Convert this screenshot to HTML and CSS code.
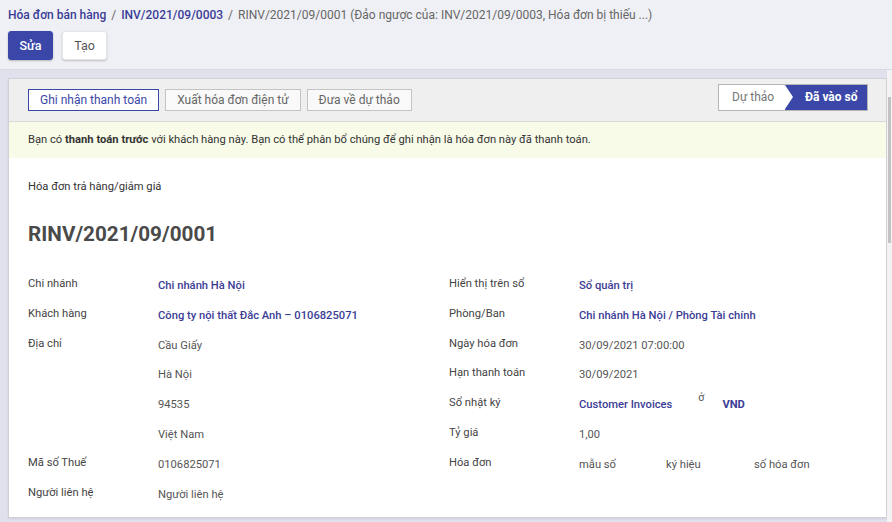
FILE: index.html
```html
<!DOCTYPE html>
<html lang="vi">
<head>
<meta charset="utf-8">
<title>RINV/2021/09/0001</title>
<link rel="stylesheet" href="styles.css">
</head>
<body>
<div class="control-panel">
  <div class="breadcrumb">
    <a class="crumb-link">Hóa đơn bán hàng</a><span class="sep">/</span><a class="crumb-link">INV/2021/09/0003</a><span class="sep">/</span><span class="crumb-active">RINV/2021/09/0001 (Đảo ngược của: INV/2021/09/0003, Hóa đơn bị thiếu ...)</span>
  </div>
  <div class="cp-buttons">
    <button class="btn-primary">Sửa</button>
    <button class="btn-secondary">Tạo</button>
  </div>
</div>
<div class="content">
  <div class="main">
    <div class="sheet">
      <div class="statusbar">
        <div class="actions">
          <button class="act act-primary">Ghi nhận thanh toán</button>
          <button class="act">Xuất hóa đơn điện tử</button>
          <button class="act">Đưa về dự thảo</button>
        </div>
        <div class="status">
          <span class="st st-draft">Dự thảo</span>
          <span class="st st-posted">Đã vào sổ</span>
        </div>
      </div>
      <div class="alert">Bạn có <b>thanh toán trước</b> với khách hàng này. Bạn có thể phân bổ chúng để ghi nhận là hóa đơn này đã thanh toán.</div>
      <div class="body">
        <div class="subtitle">Hóa đơn trả hàng/giảm giá</div>
        <h1 class="title">RINV/2021/09/0001</h1>
        <div class="groups">
          <div class="group">
            <div class="lbl">Chi nhánh</div><div class="val link">Chi nhánh Hà Nội</div>
            <div class="lbl">Khách hàng</div><div class="val link">Công ty nội thất Đắc Anh – 0106825071</div>
            <div class="lbl">Địa chỉ</div><div class="val">Cầu Giấy</div>
            <div class="lbl"></div><div class="val">Hà Nội</div>
            <div class="lbl"></div><div class="val">94535</div>
            <div class="lbl"></div><div class="val">Việt Nam</div>
            <div class="lbl">Mã số Thuế</div><div class="val">0106825071</div>
            <div class="lbl">Người liên hệ</div><div class="val">Người liên hệ</div>
          </div>
          <div class="group">
            <div class="lbl">Hiển thị trên sổ</div><div class="val link">Sổ quản trị</div>
            <div class="lbl">Phòng/Ban</div><div class="val link">Chi nhánh Hà Nội / Phòng Tài chính</div>
            <div class="lbl">Ngày hóa đơn</div><div class="val">30/09/2021 07:00:00</div>
            <div class="lbl">Hạn thanh toán</div><div class="val">30/09/2021</div>
            <div class="lbl">Sổ nhật ký</div><div class="val journal"><span class="link">Customer Invoices</span><span class="in">ở</span><span class="link bold">VND</span></div>
            <div class="lbl">Tỷ giá</div><div class="val">1,00</div>
            <div class="lbl">Hóa đơn</div><div class="val inv"><span class="c1">mẫu số</span><span class="c2">ký hiệu</span><span>số hóa đơn</span></div>
          </div>
        </div>
      </div>
    </div>
  </div>
  <div class="scrolltrack"><div class="thumb"></div></div>
</div>
</body>
</html>
```
FILE: styles.css
```css
* { box-sizing: border-box; }
html, body { margin: 0; padding: 0; }
body {
  width: 892px;
  height: 522px;
  overflow: hidden;
  font-family: Roboto, "Liberation Sans", sans-serif;
  font-size: 11.2px;
  color: #4c4c4c;
  background: #e0e1ec;
}
.control-panel {
  height: 70px;
  background: #eff0f5;
  border-bottom: 1px solid #d9dae0;
  padding: 6px 8px 0;
}
.breadcrumb {
  font-size: 12px;
  line-height: 18px;
  color: #666;
  white-space: nowrap;
}
.crumb-link { color: #3b3d95; font-weight: 500; }
.sep { margin: 0 5px; color: #666; }
.crumb-active { color: #666; }
.cp-buttons {
  margin-top: 7px;
  display: flex;
  gap: 9px;
}
.cp-buttons button {
  font-family: inherit;
  font-size: 12.5px;
  height: 29px;
  width: 45px;
  border-radius: 3px;
  padding: 0;
  cursor: pointer;
}
.btn-primary {
  background: #3b47a8;
  color: #fff;
  border: 1px solid #3b47a8;
  box-shadow: 0 1px 2px rgba(0,0,0,0.25);
  font-weight: 500;
}
.btn-secondary {
  background: #fff;
  color: #555;
  border: 1px solid #e6e6ea;
  box-shadow: 0 1px 2px rgba(0,0,0,0.2);
}
.content {
  display: flex;
  height: 452px;
}
.main {
  flex: 1;
  padding: 8px 0 0 8px;
}
.sheet {
  background: #fff;
  border: 1px solid #cfd0d8;
  height: 440px;
  box-shadow: 0 1px 2px rgba(0,0,0,0.08);
}
.statusbar {
  height: 43px;
  background: #efefef;
  border-bottom: 1px solid #d9d9d9;
  display: flex;
  align-items: flex-start;
  justify-content: space-between;
  padding: 0 18px 0 19px;
}
.actions {
  display: flex;
  gap: 6px;
  margin-top: 10px;
}
.act {
  font-family: inherit;
  font-size: 12px;
  height: 22px;
  padding: 0 11px;
  background: #f9f9f9;
  color: #666;
  border: 1px solid #c4c4c4;
  border-radius: 0;
}
.act-primary {
  color: #3b47a8;
  border-color: #3b47a8;
  background: #fff;
}
.status {
  margin-top: 5px;
  display: flex;
  height: 27px;
  border: 1px solid #b5b5b5;
}
.st {
  font-size: 12px;
  line-height: 25px;
  height: 25px;
  display: block;
}
.st-draft {
  background: #fff;
  color: #777;
  width: 66px;
  padding-left: 13px;
}
.st-posted {
  position: relative;
  background: #3b47a8;
  color: #fff;
  font-weight: 700;
  width: 82px;
  padding-left: 20px;
}
.st-posted::before {
  content: "";
  position: absolute;
  left: 0;
  top: 0;
  border-top: 12.5px solid transparent;
  border-bottom: 12.5px solid transparent;
  border-left: 8px solid #fff;
}
.alert {
  background: #f8fbe8;
  height: 36px;
  line-height: 36px;
  padding: 0 19px;
  color: #333;
  font-size: 11.2px;
}
.alert b { font-weight: 700; }
.body {
  padding: 21px 19px 0;
}
.subtitle {
  font-size: 11.2px;
  color: #333;
  line-height: 16px;
}
.title {
  margin: 25px 0 0;
  font-size: 20.7px;
  line-height: 28px;
  font-weight: 700;
  color: #4a4a4a;
}
.groups {
  margin-top: 26px;
  display: grid;
  grid-template-columns: 421px 1fr;
}
.group {
  display: grid;
  grid-template-columns: 130px 1fr;
  grid-auto-rows: 29.8px;
  align-content: start;
}
.lbl {
  color: #444;
  font-size: 11.2px;
  line-height: 18px;
  padding-top: 1px;
}
.val {
  color: #555;
  font-size: 11.2px;
  line-height: 18px;
  padding-top: 3px;
}
.link { color: #3b3d95; font-weight: 500; }
.bold { font-weight: 700; }
.journal { display: flex; }
.journal .in {
  font-size: 10.5px;
  color: #555;
  margin: -7px 18px 0 26px;
}
.inv { display: flex; }
.inv .c1 { width: 87px; }
.inv .c2 { width: 88px; }
.scrolltrack {
  width: 5px;
  background: #f3f3f3;
  padding-top: 27px;
}
.thumb {
  width: 3px;
  margin-left: 1px;
  height: 146px;
  background: #c3c3c3;
}
```
